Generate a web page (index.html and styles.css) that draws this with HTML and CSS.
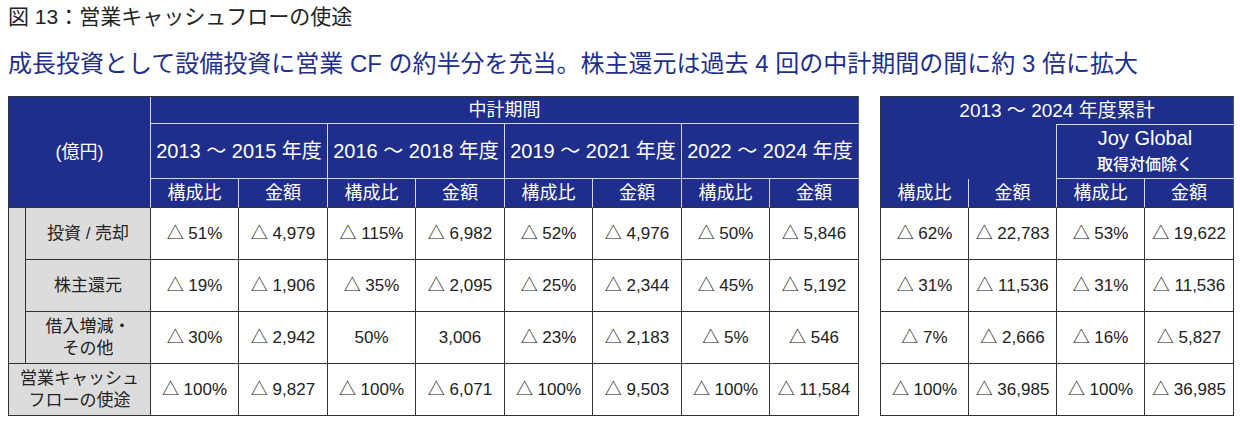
FILE: index.html
```html
<!DOCTYPE html>
<html lang="ja">
<head>
<meta charset="utf-8">
<title>営業キャッシュフローの使途</title>
<link rel="stylesheet" href="styles.css">
</head>
<body>
<div class="page">
  <h1 class="title">図 13：営業キャッシュフローの使途</h1>
  <p class="lead">成長投資として設備投資に営業 CF の約半分を充当。株主還元は過去 4 回の中計期間の間に約 3 倍に拡大</p>
  <div class="tables">
    <table class="tbl main">
      <colgroup>
        <col class="c-side"><col class="c-label">
        <col class="c-88"><col class="c-89"><col class="c-88"><col class="c-89">
        <col class="c-88"><col class="c-89"><col class="c-88"><col class="c-89">
      </colgroup>
      <thead>
        <tr class="h1">
          <th class="unit hb" colspan="2" rowspan="3">(億円)</th>
          <th class="top last" colspan="8">中計期間</th>
        </tr>
        <tr class="h2">
          <th class="period" colspan="2">2013 ～ 2015 年度</th>
          <th class="period" colspan="2">2016 ～ 2018 年度</th>
          <th class="period" colspan="2">2019 ～ 2021 年度</th>
          <th class="period last" colspan="2">2022 ～ 2024 年度</th>
        </tr>
        <tr class="h3">
          <th class="sub hb">構成比</th><th class="sub hb">金額</th>
          <th class="sub hb">構成比</th><th class="sub hb">金額</th>
          <th class="sub hb">構成比</th><th class="sub hb">金額</th>
          <th class="sub hb">構成比</th><th class="sub hb last">金額</th>
        </tr>
      </thead>
      <tbody>
        <tr>
          <td class="side" rowspan="3"></td>
          <td class="label">投資 / 売却</td>
          <td>△ 51%</td><td>△ 4,979</td><td>△ 115%</td><td>△ 6,982</td>
          <td>△ 52%</td><td>△ 4,976</td><td>△ 50%</td><td>△ 5,846</td>
        </tr>
        <tr>
          <td class="label">株主還元</td>
          <td>△ 19%</td><td>△ 1,906</td><td>△ 35%</td><td>△ 2,095</td>
          <td>△ 25%</td><td>△ 2,344</td><td>△ 45%</td><td>△ 5,192</td>
        </tr>
        <tr>
          <td class="label">借入増減・<br>その他</td>
          <td>△ 30%</td><td>△ 2,942</td><td>50%</td><td>3,006</td>
          <td>△ 23%</td><td>△ 2,183</td><td>△ 5%</td><td>△ 546</td>
        </tr>
        <tr>
          <td class="label" colspan="2">営業キャッシュ<br>フローの使途</td>
          <td>△ 100%</td><td>△ 9,827</td><td>△ 100%</td><td>△ 6,071</td>
          <td>△ 100%</td><td>△ 9,503</td><td>△ 100%</td><td>△ 11,584</td>
        </tr>
      </tbody>
    </table>

    <table class="tbl total">
      <colgroup>
        <col class="c-88"><col class="c-88"><col class="c-88"><col class="c-89">
      </colgroup>
      <thead>
        <tr class="h1">
          <th class="top total-top last" colspan="4">2013 ～ 2024 年度累計</th>
        </tr>
        <tr class="h2">
          <th class="blank" colspan="2"></th>
          <th class="joy last" colspan="2"><span class="joy-en">Joy Global</span><br><span class="joy-ja">取得対価除く</span></th>
        </tr>
        <tr class="h3">
          <th class="sub hb">構成比</th><th class="sub hb">金額</th>
          <th class="sub hb">構成比</th><th class="sub hb last">金額</th>
        </tr>
      </thead>
      <tbody>
        <tr>
          <td>△ 62%</td><td>△ 22,783</td><td>△ 53%</td><td>△ 19,622</td>
        </tr>
        <tr>
          <td>△ 31%</td><td>△ 11,536</td><td>△ 31%</td><td>△ 11,536</td>
        </tr>
        <tr>
          <td>△ 7%</td><td>△ 2,666</td><td>△ 16%</td><td>△ 5,827</td>
        </tr>
        <tr>
          <td>△ 100%</td><td>△ 36,985</td><td>△ 100%</td><td>△ 36,985</td>
        </tr>
      </tbody>
    </table>
  </div>
</div>
</body>
</html>
```

FILE: styles.css
```css
* {
  box-sizing: border-box;
}

html, body {
  margin: 0;
  padding: 0;
  background: #ffffff;
}

body {
  font-family: "Liberation Sans", "Noto Sans CJK JP", sans-serif;
  color: #222222;
}

.page {
  padding: 0 8px;
}

.title {
  margin: 0;
  font-size: 21px;
  line-height: 34px;
  font-weight: 400;
  color: #222222;
}

.lead {
  margin: 12px 0 0;
  font-size: 24px;
  line-height: 36px;
  font-weight: 400;
  color: #1f2f8e;
}

.tables {
  display: flex;
  align-items: flex-start;
  gap: 21px;
  margin-top: 14px;
}

.tbl {
  border-collapse: separate;
  border-spacing: 0;
  table-layout: fixed;
  border-top: 1px solid #333333;
  border-left: 1px solid #333333;
}

.main {
  width: 851px;
}

.total {
  width: 354px;
}

.c-side { width: 17px; }
.c-label { width: 125px; }
.c-88 { width: 88px; }
.c-89 { width: 89px; }

.tbl th,
.tbl td {
  padding: 0;
  text-align: center;
  vertical-align: middle;
  white-space: nowrap;
}

.tbl th {
  background: #1f2e8a;
  color: #ffffff;
  font-weight: 400;
  line-height: 24px;
  border-right: 1px solid #d4d7ee;
  border-bottom: 1px solid #d4d7ee;
}

.tbl th.last {
  border-right-color: #555a70;
}

.tbl th.hb {
  border-bottom-color: #333333;
}

.tbl td {
  font-size: 17px;
  line-height: 22px;
  color: #222222;
  background: #ffffff;
  border-right: 1px solid #333333;
  border-bottom: 1px solid #333333;
}

.h1 { height: 27px; }
.h2 { height: 55px; }
.h3 { height: 29px; }
.tbl tbody tr { height: 52px; }

.unit {
  font-size: 18px;
}

.top {
  font-size: 18px;
  font-weight: 500;
}

.total-top {
  font-size: 19px;
  font-weight: 400;
  border-bottom: none !important;
}

.period {
  font-size: 20px;
}

.sub {
  font-size: 18px;
  font-weight: 500;
}

.tbl th.blank {
  border-bottom: none;
  border-right-color: #d4d7ee;
}

.tbl th.joy {
  border-top: 1px solid #d4d7ee;
  line-height: 25px;
}

.joy-en {
  font-size: 20px;
}

.joy-ja {
  font-size: 16px;
  font-weight: 500;
}

.tbl td.side,
.tbl td.label {
  background: #dcdcdc;
}

.tbl td.label {
  font-size: 17px;
}
```
